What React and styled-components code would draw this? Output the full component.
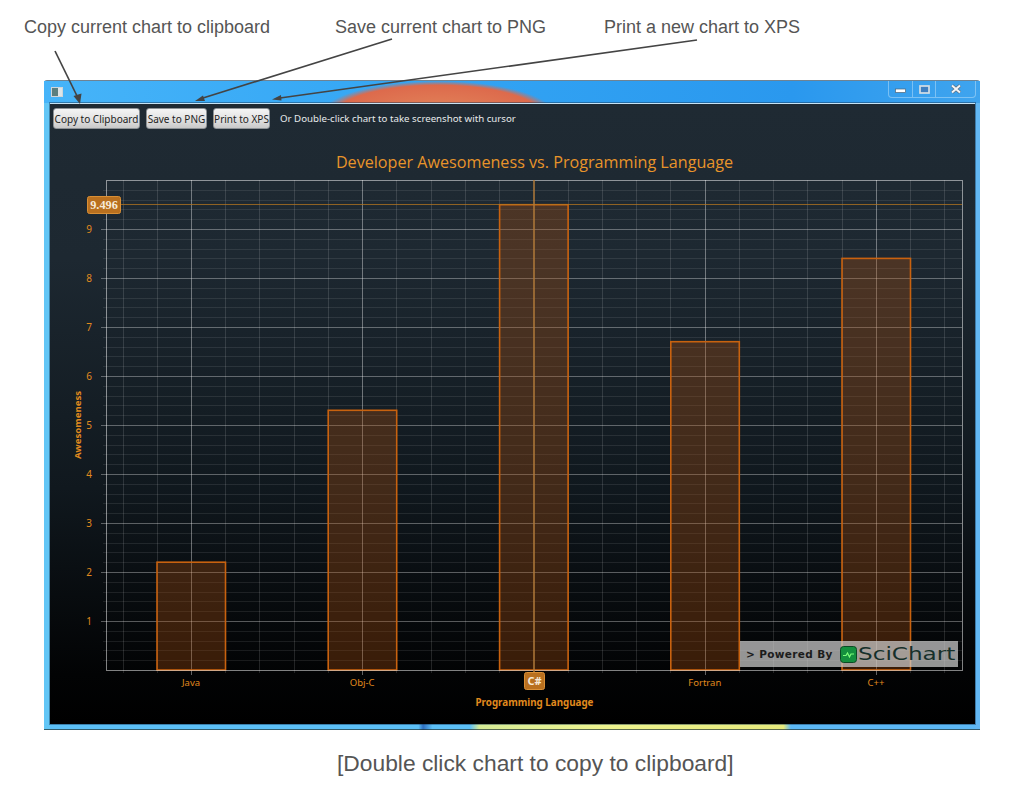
import React from 'react'
import styled, { createGlobalStyle } from 'styled-components'

const GlobalStyle = createGlobalStyle`
    html, body { margin: 0; padding: 0; background: #fff; }
    body { font-family: "Liberation Sans", Arial, sans-serif; }
`

const Page = styled.div`
    position: relative;
    width: 1024px;
    height: 810px;
    overflow: hidden;
`
const Callouts = styled.div`
    display: grid;
    grid-template-columns: 311px 269px 1fr;
    height: 80px;
    padding: 17px 0 0 24px;
    box-sizing: border-box;
    font-size: 18px;
    line-height: 20px;
    color: #555;
`
const Arrows = styled.svg`
    position: absolute;
    left: 0;
    top: 0;
    z-index: 2;
    pointer-events: none;
`
const Window = styled.div`
    width: 936px;
    height: 650px;
    margin-left: 44px;
    box-sizing: border-box;
    display: flex;
    flex-direction: column;
    border-top: 1px solid #6f8393;
    border-radius: 3px 3px 0 0;
    box-shadow: inset 0 -1px 0 rgba(30, 50, 50, 0.7);
    background:
        linear-gradient(90deg, #62c6f6 0, #62c6f6 6px, transparent 6px, transparent 931px, #62b7f3 931px) top / 100% 100% no-repeat,
        linear-gradient(90deg, #5cc0f7 0, #5cc0f7 40%, #2f6fc0 40.5%, #5cc0f7 41.5%, #5cc0f7 45.5%, #d6ec96 46.5%, #eef48e 60%, #e6ea7c 79%, #5cb8f5 79.8%) bottom / 100% 7px no-repeat,
        linear-gradient(90deg, #4cb8f8, #2d9ff0);
`
const TitleBar = styled.div`
    height: 22px;
    flex: 0 0 auto;
    display: flex;
    justify-content: space-between;
    align-items: flex-start;
    padding: 0 4px 0 7px;
    background:
        radial-gradient(ellipse 118px 35px at 394px 35px, #e2885c 0, #dd6a4c 88%, rgba(221, 106, 76, 0) 100%),
        linear-gradient(90deg, #46b4f9 0, #33a5f4 40%, #2a98ee 80%, #3fa4ee 100%);
`
const AppIcon = styled.div`
    width: 10px;
    height: 8px;
    margin-top: 6px;
    border: 1px solid #cfd6da;
    background: linear-gradient(90deg, #5b7f80 0, #5b7f80 62%, #dfe5e8 62%);
`
const Controls = styled.div`
    display: flex;
    height: 16px;
    border: 1px solid rgba(190, 225, 250, 0.5);
    border-top: none;
    border-radius: 0 0 4px 4px;
`
const ControlBtn = styled.div`
    width: ${p => p.$w}px;
    display: flex;
    align-items: center;
    justify-content: center;
    border-left: ${p => (p.$first ? 'none' : '1px solid rgba(190, 225, 250, 0.5)')};
`
const Client = styled.div`
    flex: 1 1 auto;
    margin: 0 5px 6px 6px;
    display: flex;
    flex-direction: column;
    border-top: 1px solid #c6e3f5;
    box-shadow: 0 0 0 1px rgba(20, 50, 80, 0.45);
    background: linear-gradient(180deg, #1f2a33 0, #1d2831 25%, #10181e 62%, #020304 92%, #000 100%);
    overflow: hidden;
    position: relative;
`
const Toolbar = styled.div`
    height: 29px;
    flex: 0 0 auto;
    display: flex;
    align-items: center;
    gap: 6px;
    padding-left: 3px;
    font-family: "Noto Sans", sans-serif;
    font-size: 10px;
`
const ToolButton = styled.div`
    width: ${p => p.$w}px;
    height: 21px;
    box-sizing: border-box;
    display: flex;
    align-items: center;
    justify-content: center;
    white-space: nowrap;
    color: #222;
    background: linear-gradient(180deg, #f4f4f4, #e4e4e4 50%, #c9c9c9);
    border: 1px solid #8d9296;
    border-radius: 3px;
`
const Hint = styled.span`
    color: #e8eaec;
    margin-left: 4px;
    font-size: 9.7px;
`
const ChartSvg = styled.svg`
    display: block;
    flex: 1 1 auto;
    font-family: "Noto Sans", sans-serif;
`
const Watermark = styled.div`
    position: absolute;
    left: 690px;
    top: 537px;
    width: 218px;
    height: 26px;
    display: flex;
    align-items: center;
    padding-left: 6px;
    box-sizing: border-box;
    background: rgba(205, 205, 205, 0.72);
    color: #1c1c1c;
`
const PoweredBy = styled.span`
    font-family: "DejaVu Sans", sans-serif;
    font-size: 10.5px;
    font-weight: 700;
    letter-spacing: 0.35px;
    white-space: nowrap;
    width: 94px;
`
const LogoText = styled.span`
    font-family: "DejaVu Sans", sans-serif;
    font-size: 17px;
    color: #16302a;
    margin-left: 1px;
    white-space: nowrap;
    transform: scaleX(1.36);
    transform-origin: left center;
`
const Caption = styled.div`
    margin-top: 20px;
    padding-left: 337px;
    font-size: 22.8px;
    line-height: 26px;
    color: #555;
    white-space: nowrap;
`

const PLOT = { left: 106, right: 962, top: 180, bottom: 670 }
const UNIT = 49
const STEP_X = 34.24
const ORANGE = '#e08a1e'

const yOf = v => PLOT.bottom - v * UNIT
// keep 1px lines on the pixel grid
const crisp = n => Math.round(n) + 0.5

const bars = [
    { name: 'Java', x: 191, value: 2.2 },
    { name: 'Obj-C', x: 362.2, value: 5.3 },
    { name: 'C#', x: 533.6, value: 9.496 },
    { name: 'Fortran', x: 704.8, value: 6.7 },
    { name: 'C++', x: 876, value: 8.4 },
]

const yMajor = [1, 2, 3, 4, 5, 6, 7, 8, 9]
const yMinor = Array.from({ length: 50 }, (_, i) => i / 5).filter(v => v > 0 && v % 1 !== 0)
const xMinor = Array.from({ length: 26 }, (_, i) => 122.5 + i * STEP_X).filter(
    x => x > PLOT.left && x < PLOT.right && !bars.some(b => Math.abs(b.x - x) < 2)
)

const Chart = () => (
    <ChartSvg width="925" height="591" viewBox="50 133 925 591">
        <text x="534.5" y="167.5" textAnchor="middle" fontSize="16.15" fontFamily="Open Sans, sans-serif" fill="#e8942a">
            Developer Awesomeness vs. Programming Language
        </text>

        {yMinor.map(v => (
            <line key={v} x1={PLOT.left - 3} x2={PLOT.right} y1={crisp(yOf(v))} y2={crisp(yOf(v))} stroke="#fff" strokeOpacity="0.09" />
        ))}
        {xMinor.map(x => (
            <line key={x} x1={crisp(x)} x2={crisp(x)} y1={PLOT.top} y2={PLOT.bottom + 3} stroke="#fff" strokeOpacity="0.13" />
        ))}
        {yMajor.map(v => (
            <line key={v} x1={PLOT.left - 5} x2={PLOT.right} y1={crisp(yOf(v))} y2={crisp(yOf(v))} stroke="#fff" strokeOpacity="0.33" />
        ))}
        {bars.filter(b => b.name !== 'C#').map(b => (
            <line key={b.name} x1={crisp(b.x)} x2={crisp(b.x)} y1={PLOT.top} y2={PLOT.bottom + 5} stroke="#fff" strokeOpacity="0.38" />
        ))}

        {bars.map(b => (
            <rect
                key={b.name}
                x={b.x - 34}
                y={yOf(b.value)}
                width="68.5"
                height={b.value * UNIT}
                fill="#a9500f"
                fillOpacity="0.33"
                stroke="#c8620f"
                strokeWidth="1.6"
            />
        ))}

        <rect
            x={PLOT.left + 0.5}
            y={PLOT.top + 0.5}
            width={PLOT.right - PLOT.left}
            height={PLOT.bottom - PLOT.top}
            fill="none"
            stroke="#fff"
            strokeOpacity="0.5"
        />

        {/* cursor lines */}
        <line x1={PLOT.left} x2={PLOT.right} y1="204.5" y2="204.5" stroke="#b5761f" strokeOpacity="0.75" />
        <line x1="534" x2="534" y1={PLOT.top} y2={PLOT.bottom + 3} stroke="#b07a3a" strokeWidth="1.5" />

        {yMajor.map(v => (
            <text key={v} x="89" y={yOf(v) + 3.5} textAnchor="middle" fontSize="10" fill={ORANGE}>{v}</text>
        ))}
        {bars.filter(b => b.name !== 'C#').map(b => (
            <text key={b.name} x={b.x} y="686" textAnchor="middle" fontSize="9.5" fill={ORANGE}>{b.name}</text>
        ))}

        <text
            transform="translate(81 425) rotate(-90)"
            textAnchor="middle"
            fontSize="9.6"
            fontWeight="700"
            fill={ORANGE}
        >
            Awesomeness
        </text>
        <text x="534.5" y="705.5" textAnchor="middle" fontSize="9.8" fontWeight="700" fill={ORANGE}>
            Programming Language
        </text>

        <rect x="87.5" y="196.5" width="33" height="17" rx="2" fill="#b9701f" stroke="#d98f35" />
        <text x="104" y="209" textAnchor="middle" fontSize="12.3" fontWeight="700" fontFamily="Liberation Serif, serif" fill="#f6ead8">
            9.496
        </text>
        <rect x="524.5" y="672.5" width="20" height="17" rx="2" fill="#b9701f" stroke="#d98f35" />
        <text x="534.5" y="685" textAnchor="middle" fontSize="11" fontWeight="700" fill="#f6ead8">C#</text>
    </ChartSvg>
)

const App = () => (
    <Page>
        <GlobalStyle />
        <Callouts>
            <span>Copy current chart to clipboard</span>
            <span>Save current chart to PNG</span>
            <span>Print a new chart to XPS</span>
        </Callouts>

        <Window>
            <TitleBar>
                <AppIcon />
                <Controls>
                    <ControlBtn $w={23} $first>
                        <svg width="11" height="6" style={{ marginTop: 4 }}><rect x="0.5" y="1" width="10" height="3.5" fill="#fff" stroke="#4f6475" strokeWidth="0.7" /></svg>
                    </ControlBtn>
                    <ControlBtn $w={22}>
                        <svg width="11" height="9"><rect x="1" y="1" width="9" height="7" fill="#3f7fc0" stroke="#d4dde4" strokeWidth="1.7" /></svg>
                    </ControlBtn>
                    <ControlBtn $w={39}>
                        <svg width="12" height="10">
                            <path d="M2 1.5 L10 8.5 M10 1.5 L2 8.5" stroke="#5b6f80" strokeWidth="3.4" />
                            <path d="M2 1.5 L10 8.5 M10 1.5 L2 8.5" stroke="#f2f5f8" strokeWidth="2" />
                        </svg>
                    </ControlBtn>
                </Controls>
            </TitleBar>

            <Client>
                <Toolbar>
                    <ToolButton $w={87}>Copy to Clipboard</ToolButton>
                    <ToolButton $w={61}>Save to PNG</ToolButton>
                    <ToolButton $w={57}>Print to XPS</ToolButton>
                    <Hint>Or Double-click chart to take screenshot with cursor</Hint>
                </Toolbar>
                <Chart />
                <Watermark>
                    <PoweredBy>&gt; Powered By</PoweredBy>
                    <svg width="17" height="17" viewBox="0 0 17 17">
                        <rect x="0.5" y="0.5" width="16" height="16" rx="3" fill="#14903e" stroke="#0c4a24" />
                        <path d="M3 9.5 L6 9.5 L7.5 7 L9.5 11 L11 8 L14 8" fill="none" stroke="#7dff7a" strokeWidth="1.2" />
                    </svg>
                    <LogoText>SciChart</LogoText>
                </Watermark>
            </Client>
        </Window>

        <Caption>[Double click chart to copy to clipboard]</Caption>

        <Arrows width="1024" height="810" viewBox="0 0 1024 810">
            <g stroke="#444" strokeWidth="1.7" fill="none">
                <line x1="55" y1="51" x2="78" y2="98" />
                <line x1="392" y1="39" x2="203" y2="98" />
                <line x1="697" y1="40" x2="280" y2="98" />
            </g>
            <g fill="#444">
                <polygon points="80,104 73.5,96 81.5,93.5" />
                <polygon points="195,101 203,95.5 205,101" />
                <polygon points="272,99.5 281,95 281.5,100.5" />
            </g>
        </Arrows>
    </Page>
)

export default App
